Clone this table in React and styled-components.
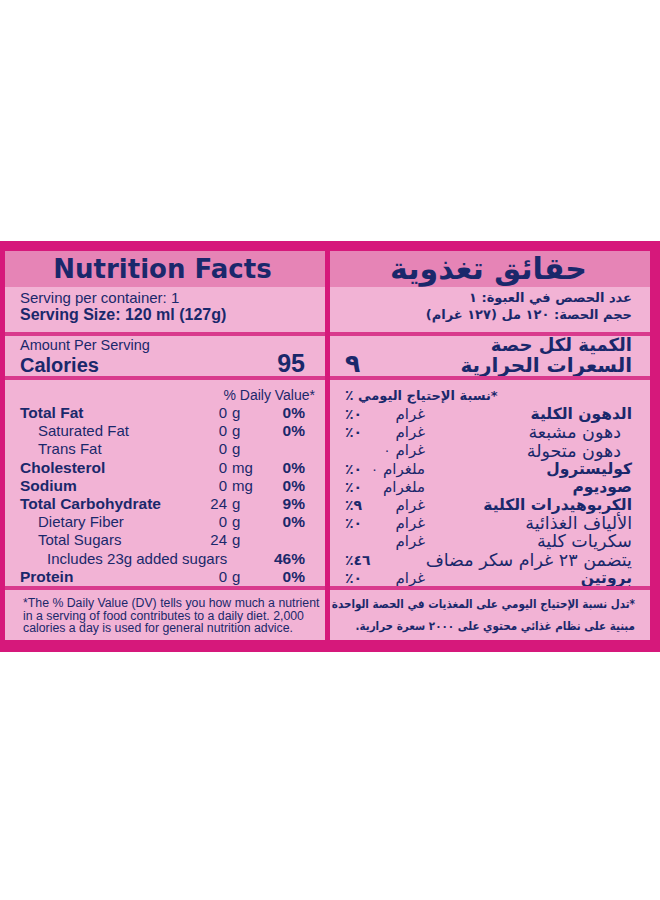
import React from 'react';
import styled, { createGlobalStyle } from 'styled-components';

const MAGENTA = '#d6187b';
const RULE = '#d93a8d';
const HEAD = '#e684b6';
const LIGHT = '#f2b3d5';
const INK = '#1a286b';
const EN = `"Liberation Sans", Arial, sans-serif`;
const AR = `"DejaVu Sans", sans-serif`;
const AR_NARROW = `"DejaVu Sans Condensed", "DejaVu Sans", sans-serif`;

const GlobalStyle = createGlobalStyle`
  body {
    margin: 0;
    background: #fff;
  }
`;

const Page = styled.div`
  padding-top: 241px;
`;

const Label = styled.div`
  display: grid;
  grid-template-columns: 320px 320px;
  grid-template-rows: 36px 45px 44px 210px 54px;
  column-gap: 5px;
  padding: 10px 10px 12px 5px;
  background: ${MAGENTA};
  color: ${INK};
`;

const Cell = styled.div`
  background: ${LIGHT};
  direction: ${p => (p.$rtl ? 'rtl' : 'ltr')};
  font-family: ${p => (p.$rtl ? AR : EN)};
  padding: ${p => (p.$rtl ? '0 18px 0 15px' : '0 20px 0 15px')};
  border-top: ${p => (p.$rule ? `4px solid ${RULE}` : 'none')};
  min-width: 0;
`;

const TitleCell = styled(Cell)`
  background: ${HEAD};
  display: flex;
  align-items: center;
  justify-content: center;
`;

const Title = styled.h1`
  margin: 0;
  font-family: "DejaVu Sans", sans-serif;
  font-weight: bold;
  font-size: ${p => (p.$rtl ? '30px' : '26px')};
  line-height: 36px;
`;

const ServingCell = styled(Cell)`
  padding-top: 2px;
`;

const Line = styled.div`
  font-size: ${p => p.$size || 15}px;
  font-weight: ${p => (p.$bold ? 'bold' : 'normal')};
  line-height: ${p => p.$lh || 17}px;
  white-space: nowrap;
`;

const AmountCell = styled(Cell)`
  padding-top: 1px;
`;

const CaloriesRow = styled.div`
  display: flex;
  justify-content: space-between;
  align-items: baseline;
  line-height: 21px;
  font-weight: bold;
`;

const CaloriesLabel = styled.span`
  font-size: 20px;
`;

const CaloriesValue = styled.span`
  font-size: 25px;
`;

const NutrientCell = styled(Cell)`
  padding-top: 6px;
`;

const DailyHead = styled.div`
  line-height: 18px;
  white-space: nowrap;
  text-align: ${p => (p.$rtl ? 'left' : 'right')};
  margin-right: ${p => (p.$rtl ? '0' : '-10px')};
  font-weight: ${p => (p.$rtl ? 'bold' : 'normal')};
  font-size: ${p => (p.$rtl ? '13px' : '14px')};
  direction: ltr;
`;

const Row = styled.div`
  display: grid;
  grid-template-columns: ${p => (p.$rtl ? '1fr 52px 28px' : '1fr 30px 33px 45px')};
  align-items: center;
  height: 18.2px;
  line-height: 18.2px;
  font-size: 15px;
  white-space: nowrap;
`;

const Name = styled.span`
  font-weight: ${p => (p.$bold ? 'bold' : 'normal')};
  font-size: ${p => (p.$bold ? '15.5px' : p.$rtl ? '17.5px' : '15px')};
  padding-inline-start: ${p => (p.$indent || 0) * (p.$rtl ? 11 : 18)}px;
  grid-column: ${p => (p.$wide ? (p.$rtl ? '1 / 3' : '1 / 4') : 'auto')};
`;

const Num = styled.span`
  text-align: right;
`;

const Unit = styled.span`
  padding-left: 5px;
`;

const ArUnit = styled.span`
  display: flex;
  direction: ltr;
  justify-content: flex-end;
  align-items: baseline;
  gap: 5px;
  font-size: 15px;
`;

const Zero = styled.span`
  font-size: 13px;
`;

const Pct = styled.span`
  font-weight: bold;
  font-size: ${p => (p.$rtl ? '14px' : '15.5px')};
  direction: ltr;
  unicode-bidi: bidi-override;
  text-align: ${p => (p.$rtl ? 'left' : 'right')};
`;

const NoteCell = styled(Cell)`
  padding: ${p => (p.$rtl ? '3px 15px 0 3px' : '7px 4px 0 18px')};
`;

const Note = styled.p`
  margin: 0;
  font-family: ${p => (p.$rtl ? AR_NARROW : EN)};
  font-stretch: ${p => (p.$rtl ? 'condensed' : 'normal')};
  font-size: ${p => (p.$rtl ? '11.5px' : '12.3px')};
  font-weight: ${p => (p.$rtl ? 'bold' : 'normal')};
  line-height: ${p => (p.$rtl ? '22px' : '12.5px')};
  white-space: nowrap;
`;

const enRows = [
  { name: 'Total Fat', bold: true, num: '0', unit: 'g', pct: '0%' },
  { name: 'Saturated Fat', indent: 1, num: '0', unit: 'g', pct: '0%' },
  { name: 'Trans Fat', indent: 1, num: '0', unit: 'g' },
  { name: 'Cholesterol', bold: true, num: '0', unit: 'mg', pct: '0%' },
  { name: 'Sodium', bold: true, num: '0', unit: 'mg', pct: '0%' },
  { name: 'Total Carbohydrate', bold: true, num: '24', unit: 'g', pct: '9%' },
  { name: 'Dietary Fiber', indent: 1, num: '0', unit: 'g', pct: '0%' },
  { name: 'Total Sugars', indent: 1, num: '24', unit: 'g' },
  { name: 'Includes 23g added sugars', indent: 1.5, wide: true, pct: '46%' },
  { name: 'Protein', bold: true, num: '0', unit: 'g', pct: '0%' },
];

const arRows = [
  { name: 'الدهون الكلية', bold: true, unit: 'غرام', pct: '٪٠' },
  { name: 'دهون مشبعة', indent: 1, unit: 'غرام', pct: '٪٠' },
  { name: 'دهون متحولة', indent: 1, unit: 'غرام', zero: true },
  { name: 'كوليسترول', bold: true, unit: 'ملغرام', zero: true, pct: '٪٠' },
  { name: 'صوديوم', bold: true, unit: 'ملغرام', pct: '٪٠' },
  { name: 'الكربوهيدرات الكلية', bold: true, unit: 'غرام', pct: '٪٩' },
  { name: 'الألياف الغذائية', unit: 'غرام', pct: '٪٠' },
  { name: 'سكريات كلية', unit: 'غرام' },
  { name: 'يتضمن ٢٣ غرام سكر مضاف', wide: true, pct: '٪٤٦' },
  { name: 'بروتين', bold: true, unit: 'غرام', pct: '٪٠' },
];

export default function App() {
  return (
    <Page>
      <GlobalStyle />
      <Label>
        <TitleCell>
          <Title>Nutrition Facts</Title>
        </TitleCell>
        <TitleCell $rtl>
          <Title $rtl>حقائق تغذوية</Title>
        </TitleCell>

        <ServingCell>
          <Line>Serving per container: 1</Line>
          <Line $bold $size={16}>Serving Size: 120 ml (127g)</Line>
        </ServingCell>
        <ServingCell $rtl>
          <Line $bold $size={13}>عدد الحصص في العبوة: ١</Line>
          <Line $bold $size={13}>حجم الحصة: ١٢٠ مل (١٢٧ غرام)</Line>
        </ServingCell>

        <AmountCell $rule>
          <Line $size={14.5} $lh={16}>Amount Per Serving</Line>
          <CaloriesRow>
            <CaloriesLabel>Calories</CaloriesLabel>
            <CaloriesValue>95</CaloriesValue>
          </CaloriesRow>
        </AmountCell>
        <AmountCell $rule $rtl>
          <Line $bold $size={18} $lh={16}>الكمية لكل حصة</Line>
          <CaloriesRow>
            <CaloriesLabel>السعرات الحرارية</CaloriesLabel>
            <CaloriesValue>٩</CaloriesValue>
          </CaloriesRow>
        </AmountCell>

        <NutrientCell $rule>
          <DailyHead>% Daily Value*</DailyHead>
          {enRows.map(r => (
            <Row key={r.name}>
              <Name $bold={r.bold} $indent={r.indent} $wide={r.wide}>{r.name}</Name>
              {!r.wide && <Num>{r.num}</Num>}
              {!r.wide && <Unit>{r.unit}</Unit>}
              <Pct>{r.pct}</Pct>
            </Row>
          ))}
        </NutrientCell>
        <NutrientCell $rule $rtl>
          <DailyHead $rtl>
            <Pct $rtl>٪</Pct> نسبة الإحتياج اليومي*
          </DailyHead>
          {arRows.map(r => (
            <Row key={r.name} $rtl>
              <Name $rtl $bold={r.bold} $indent={r.indent} $wide={r.wide}>{r.name}</Name>
              {!r.wide && (
                <ArUnit>
                  {r.zero && <Zero>٠</Zero>}
                  <span>{r.unit}</span>
                </ArUnit>
              )}
              <Pct $rtl>{r.pct}</Pct>
            </Row>
          ))}
        </NutrientCell>

        <NoteCell $rule>
          <Note>
            *The % Daily Value (DV) tells you how much a nutrient<br />
            in a serving of food contributes to a daily diet. 2,000<br />
            calories a day is used for general nutrition advice.
          </Note>
        </NoteCell>
        <NoteCell $rule $rtl>
          <Note $rtl>
            *تدل نسبة الإحتياج اليومي على المغذيات في الحصة الواحدة<br />
            مبنية على نظام غذائي محتوي على ٢٠٠٠ سعرة حرارية.
          </Note>
        </NoteCell>
      </Label>
    </Page>
  );
}
